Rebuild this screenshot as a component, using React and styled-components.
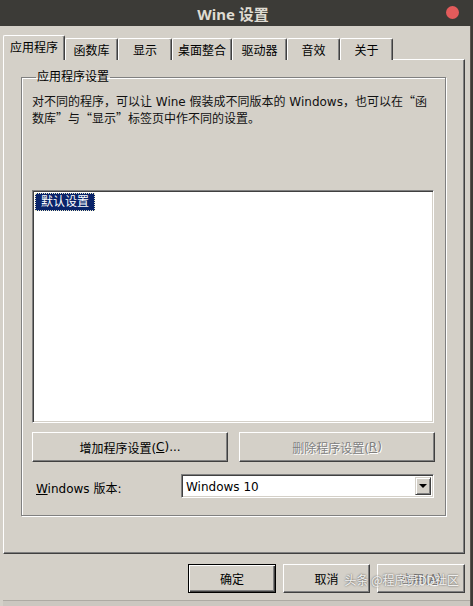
import React from "react";
import styled, { createGlobalStyle } from "styled-components";

const theme = {
  face: "#d4d0c8",
  light: "#ffffff",
  shadow: "#808080",
  dark: "#404040",
  select: "#0a246a",
  font: '"DejaVu Sans", "Noto Sans CJK SC", sans-serif'
};

const GlobalStyle = createGlobalStyle`
  html, body {
    margin: 0;
    padding: 0;
    background: ${theme.face};
  }
`;

const Window = styled.div`
  width: 473px;
  height: 606px;
  display: flex;
  flex-direction: column;
  background: ${theme.face};
  font-family: ${theme.font};
  font-size: 12px;
  color: #000;
  overflow: hidden;
`;

const TitleBar = styled.div`
  position: relative;
  height: 26px;
  flex: none;
  display: flex;
  align-items: center;
  justify-content: center;
  padding-right: 7px;
  background: #3c3b37;
`;

const Title = styled.div`
  font-family: "Noto Sans", "Noto Sans CJK SC", sans-serif;
  font-weight: bold;
  font-size: 15px;
  color: #dfdbd2;
`;

const CloseDot = styled.div`
  position: absolute;
  right: 14px;
  top: 6px;
  width: 13px;
  height: 13px;
  border-radius: 50%;
  background: #e35b5b;
`;

const Body = styled.div`
  flex: 1;
  display: flex;
`;

const Main = styled.div`
  width: 470px;
  display: flex;
  flex-direction: column;
  padding: 9px 0 0 3px;
  box-sizing: border-box;
`;

const RightEdge = styled.div`
  flex: 1;
  border-left: 1px solid #5a5650;
  background: #3e3a36;
`;

const TabBar = styled.div`
  display: flex;
  align-items: flex-end;
  height: 25px;
  margin-bottom: -1px;
`;

const Tab = styled.div`
  position: relative;
  z-index: ${p => (p.active ? 2 : 1)};
  width: ${p => p.width}px;
  height: ${p => (p.active ? 25 : 22)}px;
  box-sizing: border-box;
  display: flex;
  align-items: center;
  justify-content: center;
  padding-bottom: ${p => (p.active ? 3 : 0)}px;
  background: ${theme.face};
  border-top: 1px solid ${theme.light};
  border-left: 1px solid ${theme.light};
  border-right: 1px solid ${theme.dark};
  box-shadow: inset -1px 0 ${theme.shadow};
  border-radius: 2px 2px 0 0;
  white-space: nowrap;
`;

const Panel = styled.div`
  width: 462px;
  height: 495px;
  box-sizing: border-box;
  border-top: 1px solid ${theme.light};
  border-left: 1px solid ${theme.light};
  border-right: 1px solid ${theme.dark};
  border-bottom: 1px solid ${theme.dark};
  box-shadow: inset -1px -1px ${theme.shadow};
  padding: 9px 0 0 17px;
`;

const GroupBox = styled.fieldset`
  margin: 0;
  width: 424px;
  height: 447px;
  box-sizing: border-box;
  border: 1px solid ${theme.shadow};
  box-shadow: inset 1px 1px ${theme.light}, 1px 1px ${theme.light};
  padding: 0 10px 0 10px;
  display: flex;
  flex-direction: column;
`;

const Legend = styled.legend`
  padding: 0 1px;
  margin-left: 4px;
  line-height: 16px;
  font-size: 12px;
`;

const Description = styled.div`
  margin-top: 9px;
  line-height: 17px;
  white-space: nowrap;
  color: #111;
`;

const Quote = styled.span`
  font-family: "Noto Sans CJK SC", sans-serif;
  line-height: 1;
`;

const ListBox = styled.div`
  margin-top: 62px;
  width: 402px;
  height: 233px;
  box-sizing: border-box;
  background: #fff;
  border-top: 1px solid ${theme.shadow};
  border-left: 1px solid ${theme.shadow};
  border-right: 1px solid ${theme.light};
  border-bottom: 1px solid ${theme.light};
  box-shadow: inset 1px 1px ${theme.dark}, inset -1px -1px ${theme.face};
  padding: 2px;
`;

const ListItem = styled.div`
  display: inline-block;
  height: 18px;
  line-height: 16px;
  box-sizing: border-box;
  padding: 0 5px;
  color: ${p => (p.selected ? "#fff" : "#000")};
  background: ${p => (p.selected ? theme.select : "transparent")};
  border: 1px dotted ${p => (p.selected ? "#e8e8c8" : "transparent")};
  font-size: 12px;
`;

const ButtonRow = styled.div`
  display: flex;
  gap: ${p => p.gap}px;
  margin-top: ${p => p.top}px;
  justify-content: ${p => (p.end ? "flex-end" : "flex-start")};
`;

const Button = styled.div`
  width: ${p => p.width}px;
  height: ${p => p.height}px;
  box-sizing: border-box;
  display: flex;
  align-items: center;
  justify-content: center;
  background: ${theme.face};
  border-top: 1px solid ${p => (p.isDefault ? "#000" : theme.light)};
  border-left: 1px solid ${p => (p.isDefault ? "#000" : theme.light)};
  border-right: 1px solid ${p => (p.isDefault ? "#000" : theme.dark)};
  border-bottom: 1px solid ${p => (p.isDefault ? "#000" : theme.dark)};
  box-shadow: ${p =>
    p.isDefault
      ? `inset 1px 1px ${theme.light}, inset -1px -1px ${theme.dark}, inset -2px -2px ${theme.shadow}`
      : `inset -1px -1px ${theme.shadow}`};
  color: ${p => (p.disabled ? theme.shadow : "#000")};
  text-shadow: ${p => (p.disabled ? `1px 1px ${theme.light}` : "none")};
  white-space: nowrap;
`;

const Key = styled.span`
  text-decoration: underline;
`;

const VersionRow = styled.div`
  display: flex;
  align-items: center;
  margin-top: 12px;
`;

const VersionLabel = styled.div`
  width: 145px;
  padding-left: 4px;
  padding-top: 3px;
  white-space: nowrap;
`;

const Combo = styled.div`
  width: 253px;
  height: 24px;
  box-sizing: border-box;
  display: flex;
  align-items: center;
  background: #fff;
  border-top: 1px solid ${theme.shadow};
  border-left: 1px solid ${theme.shadow};
  border-right: 1px solid ${theme.light};
  border-bottom: 1px solid ${theme.light};
  box-shadow: inset 1px 1px ${theme.dark}, inset -1px -1px ${theme.face};
  padding: 2px;
`;

const ComboText = styled.div`
  flex: 1;
  padding-left: 2px;
  padding-top: 2px;
`;

const ComboArrow = styled.div`
  width: 16px;
  height: 18px;
  box-sizing: border-box;
  display: flex;
  align-items: center;
  justify-content: center;
  background: ${theme.face};
  border-top: 1px solid ${theme.face};
  border-left: 1px solid ${theme.face};
  border-right: 1px solid ${theme.dark};
  border-bottom: 1px solid ${theme.dark};
  box-shadow: inset 1px 1px ${theme.light}, inset -1px -1px ${theme.shadow};
`;

const Triangle = styled.div`
  width: 0;
  height: 0;
  border-left: 4px solid transparent;
  border-right: 4px solid transparent;
  border-top: 4px solid #000;
`;

const BottomArea = styled.div`
  position: relative;
  width: 462px;
`;

const Watermark = styled.div`
  position: absolute;
  right: 6px;
  top: 17px;
  font-family: "Noto Sans CJK SC", sans-serif;
  font-size: 12px;
  color: rgba(255, 255, 255, 0.9);
  text-shadow: 0 0 2px rgba(0, 0, 0, 0.7);
  white-space: nowrap;
`;

const Footer = styled.div`
  margin-top: auto;
  height: 5px;
  border-top: 1px solid #aeaaa3;
  background: #cbc7c0;
`;

const tabs = [
  { label: "应用程序", width: 62 },
  { label: "函数库", width: 53 },
  { label: "显示", width: 54 },
  { label: "桌面整合", width: 60 },
  { label: "驱动器", width: 55 },
  { label: "音效", width: 53 },
  { label: "关于", width: 53 }
];

const App = () => (
  <Window>
    <GlobalStyle />
    <TitleBar>
      <Title>Wine 设置</Title>
      <CloseDot />
    </TitleBar>
    <Body>
      <Main>
        <TabBar>
          {tabs.map((t, i) => (
            <Tab key={t.label} width={t.width} active={i === 0}>
              {t.label}
            </Tab>
          ))}
        </TabBar>
        <Panel>
          <GroupBox>
            <Legend>应用程序设置</Legend>
            <Description>
              对不同的程序，可以让 Wine 假装成不同版本的 Windows，也可以在
              <Quote>“</Quote>函
              <br />
              数库<Quote>”</Quote>与<Quote>“</Quote>显示<Quote>”</Quote>
              标签页中作不同的设置。
            </Description>
            <ListBox>
              <ListItem selected>默认设置</ListItem>
            </ListBox>
            <ButtonRow gap={11} top={9}>
              <Button width={196} height={30}>
                增加程序设置(<Key>C</Key>)...
              </Button>
              <Button width={196} height={30} disabled>
                删除程序设置(<Key>R</Key>)
              </Button>
            </ButtonRow>
            <VersionRow>
              <VersionLabel>
                <Key>W</Key>indows 版本:
              </VersionLabel>
              <Combo>
                <ComboText>Windows 10</ComboText>
                <ComboArrow>
                  <Triangle />
                </ComboArrow>
              </Combo>
            </VersionRow>
          </GroupBox>
        </Panel>
        <BottomArea>
          <ButtonRow gap={7} top={10} end>
            <Button width={88} height={29} isDefault>
              确定
            </Button>
            <Button width={87} height={29}>
              取消
            </Button>
            <Button width={88} height={29} disabled>
              应用(<Key>A</Key>)
            </Button>
          </ButtonRow>
          <Watermark>头条 @程序员DD社区</Watermark>
        </BottomArea>
        <Footer />
      </Main>
      <RightEdge />
    </Body>
  </Window>
);

export default App;
